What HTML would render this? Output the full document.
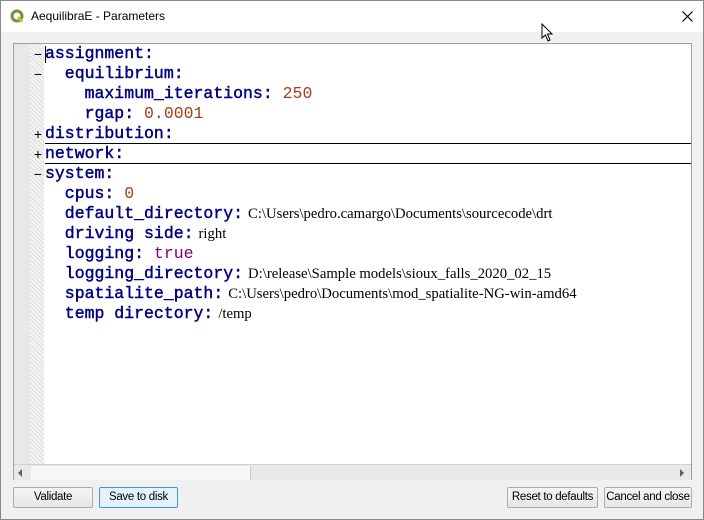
<!DOCTYPE html>
<html><head><meta charset="utf-8"><style>
*{margin:0;padding:0;box-sizing:border-box}
body{width:704px;height:520px;overflow:hidden;background:#f0f0f0;font-family:"Liberation Sans",sans-serif;position:relative}
.win{position:absolute;left:0;top:0;width:704px;height:520px;border:1px solid #8a8a8a;background:#f0f0f0}
.title{position:absolute;left:0;top:0;width:702px;height:31px;background:#fff}
.title .t{position:absolute;left:30px;top:8px;font-size:12px;color:#000}
.ed{position:absolute;left:12px;top:42px;width:679px;height:437px;border:1px solid #a0a0a0;background:#fff}
.gut{position:absolute;left:0;top:0;width:16px;height:420px;background:#e8e8e8}
.dot{position:absolute;left:16px;top:0;width:14px;height:420px;background-color:#f4f4f4;background-image:repeating-linear-gradient(45deg,#ddd 0 1px,transparent 1px 3px)}
.ln{position:absolute;left:31px;font:normal 16.5px "Liberation Mono",monospace;-webkit-text-stroke:0.45px #000080;color:#000080;white-space:pre;height:20px;line-height:20px}
.n{color:#a0401c;-webkit-text-stroke:0}
.b{color:#800080;-webkit-text-stroke:0}
.s{font:normal 14.7px "Liberation Serif",serif;color:#000;-webkit-text-stroke:0;margin-left:5px}
.fm{position:absolute;left:19px;font:14px "Liberation Sans",sans-serif;color:#000;width:10px;text-align:center;line-height:20px}
.sep{position:absolute;left:31px;right:0;height:1px;background:#000}
.hs{position:absolute;left:0;top:420px;width:677px;height:16px;border-top:1px solid #d0d0d0;background:#e8e8e8}
.th{position:absolute;left:17px;top:1px;width:220px;height:14px;background:#f7f7f7;border-right:1px solid #ccc}
.btn{position:absolute;top:486px;height:21px;border:1px solid #adadad;font-size:11.5px;letter-spacing:-0.3px;white-space:nowrap;text-align:center;line-height:19px;border-radius:2px;background:linear-gradient(#f4f4f4,#e6e6e6)}
</style></head><body>
<div class="win">
<div class="title">
<svg style="position:absolute;left:9px;top:8px" width="14" height="14" viewBox="0 0 14 14"><circle cx="7" cy="7" r="5" fill="none" stroke="#6a9a2e" stroke-width="3"/><path d="M8 8 L12 13" stroke="#e8b020" stroke-width="2.5"/></svg>
<div class="t">AequilibraE - Parameters</div>
<svg style="position:absolute;left:681px;top:10px" width="11" height="11"><path d="M0.5 0.5L10.5 10.5M10.5 0.5L0.5 10.5" stroke="#000" stroke-width="1.2"/></svg>
<svg style="position:absolute;left:540px;top:22px" width="13" height="19" viewBox="0 0 13 19"><path d="M1 1 L1 15 L4.5 12 L7 18 L9 17 L6.5 11 L11 11 Z" fill="#fff" stroke="#000"/></svg>
</div>
<div class="ed">
<div class="gut"></div><div class="dot"></div>
<div style="position:absolute;left:31px;top:2px;width:1px;height:17px;background:#000"></div>
<div class="fm" style="top:0">−</div>
<div class="ln" style="top:0">assignment:</div>
<div class="fm" style="top:20px">−</div>
<div class="ln" style="top:20px">  equilibrium:</div>
<div class="ln" style="top:40px">    maximum_iterations: <span class="n">250</span></div>
<div class="ln" style="top:60px">    rgap: <span class="n">0.0001</span></div>
<div class="fm" style="top:80px">+</div>
<div class="ln" style="top:80px">distribution:</div>
<div class="sep" style="top:99px"></div>
<div class="fm" style="top:100px">+</div>
<div class="ln" style="top:100px">network:</div>
<div class="sep" style="top:119px"></div>
<div class="fm" style="top:120px">−</div>
<div class="ln" style="top:120px">system:</div>
<div class="ln" style="top:140px">  cpus: <span class="n">0</span></div>
<div class="ln" style="top:160px">  default_directory:<span class="s">C:\Users\pedro.camargo\Documents\sourcecode\drt</span></div>
<div class="ln" style="top:180px">  driving side:<span class="s">right</span></div>
<div class="ln" style="top:200px">  logging: <span class="b">true</span></div>
<div class="ln" style="top:220px">  logging_directory:<span class="s">D:\release\Sample models\sioux_falls_2020_02_15</span></div>
<div class="ln" style="top:240px">  spatialite_path:<span class="s">C:\Users\pedro\Documents\mod_spatialite-NG-win-amd64</span></div>
<div class="ln" style="top:260px">  temp directory:<span class="s">/temp</span></div>
<div class="hs"><div class="th"></div>
<svg style="position:absolute;left:4px;top:4px" width="5" height="8"><path d="M4 0L0 4L4 8Z" fill="#606060"/></svg>
<svg style="position:absolute;left:666px;top:4px" width="5" height="8"><path d="M0 0L4 4L0 8Z" fill="#606060"/></svg>
</div>
</div>
<div class="btn" style="left:12px;width:80px">Validate</div>
<div class="btn" style="left:98px;width:79px;border-color:#3c9ae0;background:#e5f1fb">Save to disk</div>
<div class="btn" style="left:506px;width:91px">Reset to defaults</div>
<div class="btn" style="left:603px;width:88px">Cancel and close</div>
</div>
</body></html>
